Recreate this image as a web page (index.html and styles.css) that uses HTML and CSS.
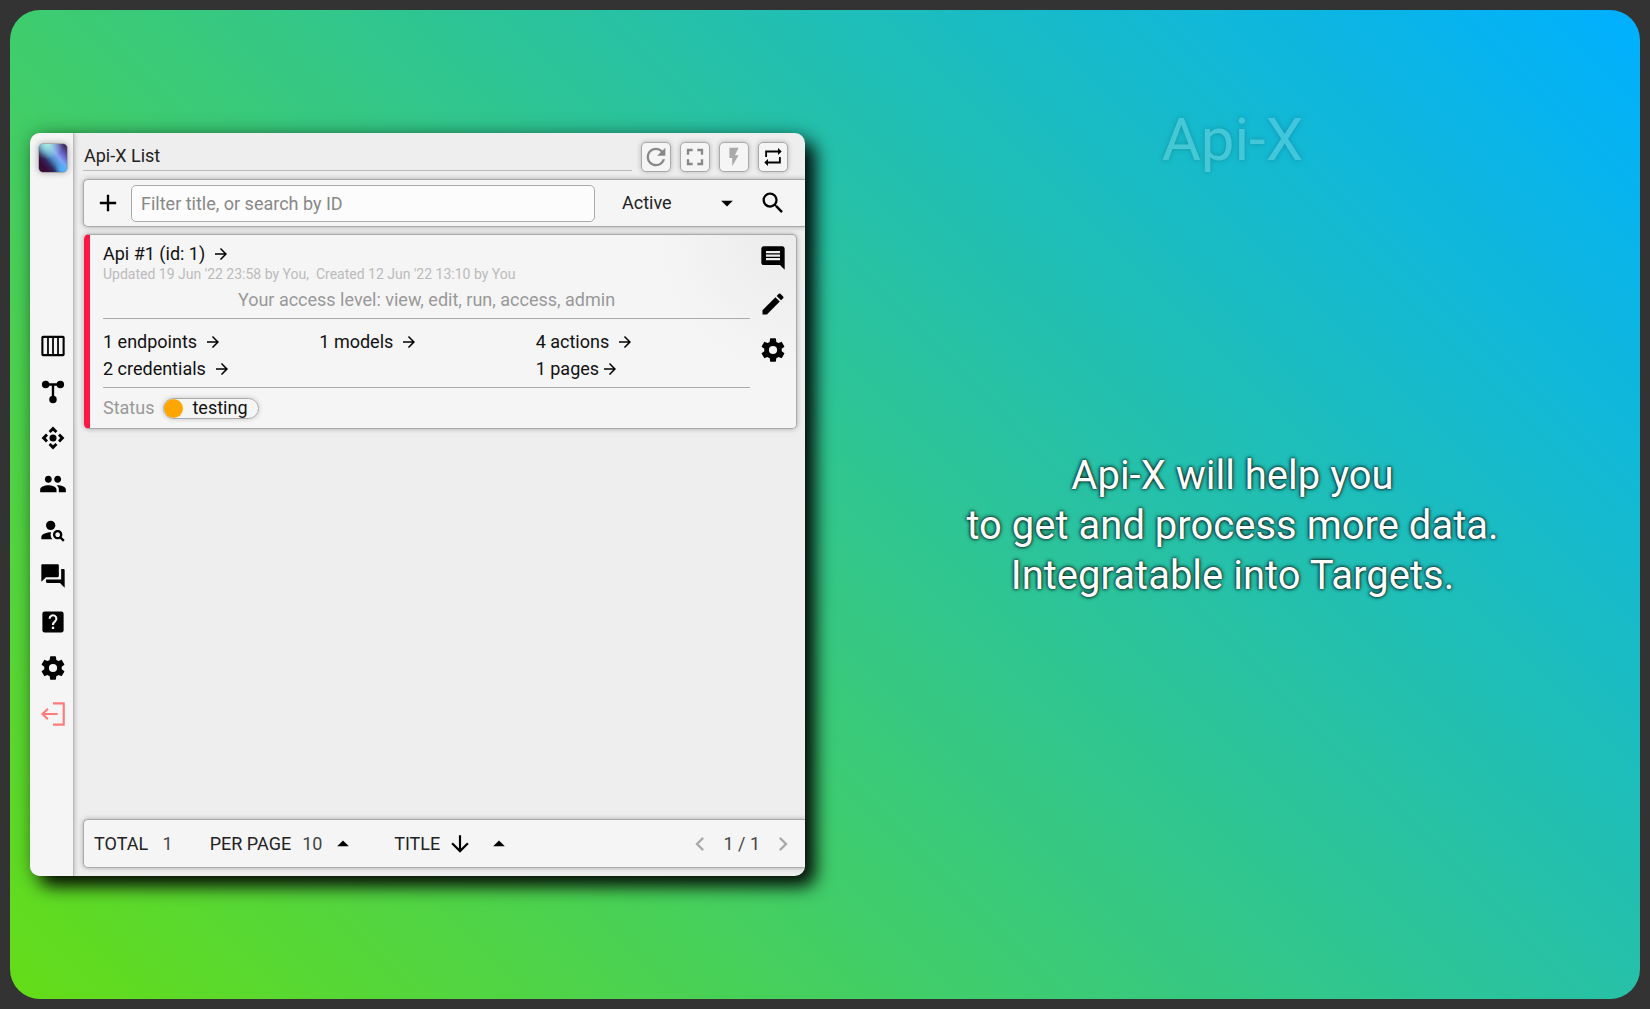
FILE: index.html
```html
<!DOCTYPE html>
<html lang="en">
<head>
<meta charset="utf-8">
<meta name="viewport" content="width=device-width, initial-scale=1">
<title>Api-X</title>
<link rel="stylesheet" href="styles.css">
</head>
<body>
<svg class="sprite" aria-hidden="true">
  <symbol id="columns" viewBox="0 0 24 24"><rect x="2.900" y="4.200" width="18.200" height="15.600" rx=".6" fill="none" stroke="currentColor" stroke-width="1.800"/><path fill="none" stroke="currentColor" stroke-width="1.500" d="M7.700 5v14M12 5v14M16.300 5v14"/></symbol>
  <symbol id="tree" viewBox="0 0 24 24"><path fill="none" stroke="currentColor" stroke-width="2" d="M5 5.600h14M12 5.600v13"/><circle cx="5.700" cy="5.600" r="3.200"/><circle cx="18.300" cy="5.600" r="3.200"/><circle cx="12" cy="18.400" r="3.200"/></symbol>
  <symbol id="target" viewBox="0 0 24 24"><circle cx="12" cy="12" r="3"/><path d="m12 2.200 3.800 3.800-1.700 1.700L12 5.800 9.900 7.700 8.200 6zM12 21.800l3.800-3.800-1.700-1.700-2.100 1.900-2.100-1.900L8.200 18zM2.200 12 6 8.200l1.700 1.700L5.800 12l1.900 2.100L6 15.800zM21.800 12 18 8.200l-1.700 1.700 1.900 2.100-1.900 2.100 1.700 1.700z"/></symbol>
  <symbol id="people" viewBox="0 0 24 24"><path d="M16 11c1.660 0 2.990-1.340 2.990-3S17.660 5 16 5s-3 1.340-3 3 1.340 3 3 3zm-8 0c1.660 0 2.990-1.340 2.990-3S9.660 5 8 5 5 6.340 5 8s1.340 3 3 3zm0 2c-2.330 0-7 1.170-7 3.500V19h14v-2.500c0-2.330-4.670-3.500-7-3.500zm8 0c-.29 0-.62.020-.97.050 1.160.84 1.970 1.970 1.970 3.450V19h6v-2.500c0-2.330-4.670-3.500-7-3.500z"/></symbol>
  <symbol id="person-search" viewBox="0 0 24 24"><circle cx="10" cy="8" r="4"/><path d="M10.350 14.010C7.620 13.910 2 15.270 2 18v2h9.540c-2.470-2.760-1.230-5.890-1.190-5.990zM19.430 18.020c.36-.59.57-1.280.57-2.020 0-2.210-1.790-4-4-4s-4 1.790-4 4 1.790 4 4 4c.74 0 1.430-.22 2.020-.57L20.590 22 22 20.590l-2.570-2.570zM16 18c-1.100 0-2-.9-2-2s.9-2 2-2 2 .9 2 2-.9 2-2 2z"/></symbol>
  <symbol id="forum" viewBox="0 0 24 24"><path d="M21 6h-2v9H6v2c0 .55.45 1 1 1h11l4 4V7c0-.55-.45-1-1-1zm-4 6V3c0-.55-.45-1-1-1H3c-.55 0-1 .45-1 1v14l4-4h10c.55 0 1-.45 1-1z"/></symbol>
  <symbol id="help" viewBox="0 0 24 24"><rect x="2.900" y="2.900" width="18.200" height="18.200" rx="2"/><path fill="none" stroke="#f5f5f5" stroke-width="1.800" d="M9.100 9.200a2.900 2.900 0 1 1 4.600 2.300C12.700 12.300 12 13 12 14.600"/><rect x="11" y="16" width="2" height="2" fill="#f5f5f5"/></symbol>
  <symbol id="gear" viewBox="0 0 24 24"><path d="M12 15.500A3.500 3.500 0 0 1 8.500 12 3.500 3.500 0 0 1 12 8.500a3.500 3.500 0 0 1 3.500 3.500 3.500 3.500 0 0 1-3.500 3.500m7.430-2.530c.04-.32.070-.64.070-.97s-.03-.66-.07-1l2.110-1.630c.19-.15.24-.42.120-.64l-2-3.460c-.12-.22-.39-.31-.61-.22l-2.490 1c-.52-.39-1.060-.73-1.690-.98l-.37-2.650A.506.506 0 0 0 14 2h-4c-.25 0-.46.180-.5.420l-.37 2.650c-.63.250-1.170.590-1.690.980l-2.490-1c-.22-.09-.49 0-.61.220l-2 3.460c-.13.220-.07.490.120.640L4.570 11c-.04.340-.07.670-.07 1s.03.650.070.970l-2.110 1.660c-.19.150-.25.420-.12.640l2 3.460c.12.220.39.300.61.220l2.490-1.010c.52.400 1.060.740 1.690.990l.37 2.650c.04.240.25.420.5.420h4c.25 0 .46-.18.500-.42l.37-2.650c.63-.26 1.170-.59 1.690-.99l2.490 1.010c.22.080.49 0 .61-.22l2-3.460c.12-.22.070-.49-.12-.64l-2.110-1.660Z"/></symbol>
  <symbol id="exit" viewBox="0 0 24 24"><path fill="none" stroke="currentColor" stroke-width="1.800" d="M12 2.900h9.200v18.200H12M16 12H3M7.600 7.400 3 12l4.600 4.600"/></symbol>
  <symbol id="refresh" viewBox="0 0 24 24"><path d="M17.650 6.350A7.958 7.958 0 0 0 12 4c-4.420 0-7.990 3.580-7.990 8s3.570 8 7.990 8c3.730 0 6.840-2.550 7.730-6h-2.080A5.990 5.990 0 0 1 12 18c-3.310 0-6-2.690-6-6s2.690-6 6-6c1.660 0 3.140.69 4.220 1.780L13 11h7V4l-2.350 2.350z"/></symbol>
  <symbol id="fullscreen" viewBox="0 0 24 24"><path d="M5 5h5v2H7v3H5V5m9 0h5v5h-2V7h-3V5m3 9h2v5h-5v-2h3v-3m-7 3v2H5v-5h2v3h3z"/></symbol>
  <symbol id="flash" viewBox="0 0 24 24"><path d="M7 2v11h3v9l7-12h-4l4-8z"/></symbol>
  <symbol id="repeat" viewBox="0 0 24 24"><path fill="none" stroke="currentColor" stroke-width="2" d="M4.500 12V6H18M19.500 12v6H6"/><path d="m17.500 2.200 4 3.800-4 3.800zM6.500 14.200l-4 3.800 4 3.800z"/></symbol>
  <symbol id="plus" viewBox="0 0 24 24"><path d="M19 13h-6v6h-2v-6H5v-2h6V5h2v6h6v2z"/></symbol>
  <symbol id="search" viewBox="0 0 24 24"><path d="M15.500 14h-.79l-.28-.27A6.471 6.471 0 0 0 16 9.500 6.500 6.500 0 1 0 9.500 16c1.610 0 3.090-.59 4.230-1.570l.27.28v.79l5 4.990L20.490 19l-4.990-5zm-6 0C7.010 14 5 11.990 5 9.500S7.010 5 9.500 5 14 7.010 14 9.500 11.990 14 9.500 14z"/></symbol>
  <symbol id="caret" viewBox="0 0 24 24"><path d="m7 10 5 5 5-5z"/></symbol>
  <symbol id="caret-up" viewBox="0 0 24 24"><path d="m7 14 5-5 5 5z"/></symbol>
  <symbol id="arrow" viewBox="0 0 24 24"><path d="m12 4-1.410 1.410L16.170 11H4v2h12.170l-5.580 5.590L12 20l8-8z"/></symbol>
  <symbol id="arrow-down" viewBox="0 0 24 24"><path d="m20 12-1.410-1.410L13 16.170V4h-2v12.170l-5.580-5.590L4 12l8 8z"/></symbol>
  <symbol id="left" viewBox="0 0 24 24"><path d="M15.410 7.410 14 6l-6 6 6 6 1.410-1.410L10.830 12z"/></symbol>
  <symbol id="right" viewBox="0 0 24 24"><path d="M10 6 8.590 7.410 13.170 12l-4.580 4.590L10 18l6-6z"/></symbol>
  <symbol id="comment" viewBox="0 0 24 24"><path d="M21.990 4c0-1.100-.89-2-1.990-2H4c-1.100 0-2 .9-2 2v12c0 1.100.9 2 2 2h14l4 4-.01-18zM18 14H6v-2h12v2zm0-3H6V9h12v2zm0-3H6V6h12v2z"/></symbol>
  <symbol id="pencil" viewBox="0 0 24 24"><path d="M3 17.250V21h3.750L17.810 9.940l-3.750-3.750L3 17.250zM20.710 7.040a.996.996 0 0 0 0-1.410l-2.340-2.340a.996.996 0 0 0-1.410 0l-1.830 1.830 3.750 3.750 1.830-1.830z"/></symbol>
</svg>

<main class="slide">
  <section class="app">
    <aside class="sidebar">
      <a class="logo" href="#" aria-label="Home"></a>
      <nav class="nav">
        <a href="#" aria-label="Boards"><svg><use href="#columns"/></svg></a>
        <a href="#" aria-label="Flows"><svg><use href="#tree"/></svg></a>
        <a href="#" aria-label="Api-X"><svg><use href="#target"/></svg></a>
        <a href="#" aria-label="People"><svg><use href="#people"/></svg></a>
        <a href="#" aria-label="Find a person"><svg><use href="#person-search"/></svg></a>
        <a href="#" aria-label="Messages"><svg><use href="#forum"/></svg></a>
        <a href="#" aria-label="Help"><svg><use href="#help"/></svg></a>
        <a href="#" aria-label="Settings"><svg><use href="#gear"/></svg></a>
        <a class="exit" href="#" aria-label="Log out"><svg><use href="#exit"/></svg></a>
      </nav>
    </aside>

    <div class="content">
      <header class="header">
        <h1 class="heading">Api-X List</h1>
        <button class="tool mid" aria-label="Refresh"><svg><use href="#refresh"/></svg></button>
        <button class="tool mid" aria-label="Full screen"><svg><use href="#fullscreen"/></svg></button>
        <button class="tool dim small" aria-label="Run"><svg><use href="#flash"/></svg></button>
        <button class="tool small" aria-label="Switch side"><svg><use href="#repeat"/></svg></button>
      </header>

      <form class="bar filter">
        <button class="icon" type="button" aria-label="Add"><svg><use href="#plus"/></svg></button>
        <input class="query" type="text" placeholder="Filter title, or search by ID" aria-label="Filter">
        <span class="pick state">
          <select aria-label="State"><option>Active</option></select>
          <svg><use href="#caret"/></svg>
        </span>
        <button class="icon" type="button" aria-label="Search"><svg><use href="#search"/></svg></button>
      </form>

      <article class="card">
        <div class="details">
          <h2 class="name"><a href="#">Api #1 (id: 1) <svg><use href="#arrow"/></svg></a></h2>
          <p class="dates">Updated 19 Jun '22 23:58 by You,&nbsp; Created 12 Jun '22 13:10 by You</p>
          <p class="access">Your access level: view, edit, run, access, admin</p>
          <div class="links">
            <a href="#">1 endpoints <svg><use href="#arrow"/></svg></a>
            <a href="#">1 models <svg><use href="#arrow"/></svg></a>
            <a href="#">4 actions <svg><use href="#arrow"/></svg></a>
            <a href="#">2 credentials <svg><use href="#arrow"/></svg></a>
            <a class="last" href="#">1 pages<svg><use href="#arrow"/></svg></a>
          </div>
          <p class="status">Status <span class="pill"><i class="dot"></i>testing</span></p>
        </div>
        <div class="actions">
          <button aria-label="Comment"><svg><use href="#comment"/></svg></button>
          <button aria-label="Edit"><svg><use href="#pencil"/></svg></button>
          <button aria-label="Configure"><svg><use href="#gear"/></svg></button>
        </div>
      </article>

      <footer class="bar pager">
        <span class="total">TOTAL <span class="value">1</span></span>
        <label class="label" for="size">PER PAGE</label>
        <span class="pick size">
          <select class="value" id="size"><option>10</option></select>
          <svg><use href="#caret-up"/></svg>
        </span>
        <span class="pick sort">
          <select aria-label="Sort by"><option>TITLE</option></select>
          <svg class="direction"><use href="#arrow-down"/></svg>
          <svg><use href="#caret-up"/></svg>
        </span>
        <button class="step" type="button" aria-label="Previous page"><svg><use href="#left"/></svg></button>
        <span class="value">1 / 1</span>
        <button class="step" type="button" aria-label="Next page"><svg><use href="#right"/></svg></button>
      </footer>
    </div>
  </section>

  <section class="pitch">
    <h2 class="product">Api-X</h2>
    <p class="claim">Api-X will help you<br>to get and process more data.<br>Integratable into Targets.</p>
  </section>
</main>
</body>
</html>
```
FILE: styles.css
```css
* { box-sizing: border-box; }

body {
  margin: 0;
  padding: 10px;
  min-height: 100vh;
  display: flex;
  background: #333;
  color: #222;
  font: 18px/24px Roboto, sans-serif;
}

h1, h2, p { margin: 0; font-weight: 400; font-size: inherit; }
a { color: #111; text-decoration: none; }
svg { width: 28px; height: 28px; fill: currentColor; flex: none; display: block; }
.sprite { display: none; }

button {
  padding: 0;
  border: 0;
  background: none;
  color: #000;
  display: grid;
  place-items: center;
}

.slide {
  flex: 1;
  display: grid;
  grid-template-columns: 1fr 1fr;
  gap: 40px;
  padding: 20px;
  align-items: center;
  border-radius: 30px;
  background: linear-gradient(45deg, #64dd17, #00b0ff);
}

/* App window */
.app {
  display: flex;
  min-height: calc(100vh - 266px);
  border-radius: 10px;
  overflow: hidden;
  background: #eee;
  box-shadow: 10px 10px 18px rgba(0, 0, 0, .95), 0 0 20px rgba(0, 0, 0, .25);
}

.sidebar {
  display: flex;
  flex-direction: column;
  align-items: center;
  width: 44px;
  padding: 10px 0 0 2px;
  background: #f5f5f5;
  border-right: 1px solid #bbb;
  box-shadow: 0 0 5px rgba(0, 0, 0, .3);
}

.logo {
  width: 30px;
  height: 30px;
  border: 1px solid #aaa;
  border-radius: 5px;
  background:
    radial-gradient(circle at 88% 90%, #4fb4ff, rgba(80, 110, 230, 0) 25%),
    radial-gradient(circle at 30% 0, #a8ecdf, rgba(110, 215, 225, 0) 45%),
    linear-gradient(52deg, #3a0a38 18%, #302a5c 32%, #4b8fce 48%, #83a6f4 62%, #6a6ad0 75%, #3a2350 95%);
  box-shadow: 0 0 6px rgba(0, 0, 0, .3);
}

.nav {
  flex: 1;
  display: flex;
  flex-direction: column;
  justify-content: center;
  padding-top: 10px;
}
.nav a { display: grid; place-items: center; height: 46px; color: #000; }
.nav .exit { color: #ff7b7b; }

.content {
  flex: 1;
  min-width: 0;
  display: flex;
  flex-direction: column;
  padding: 9px 0 8px 9px;
}

.header { display: flex; gap: 9px; padding-right: 17px; margin-bottom: 7px; }
.heading {
  flex: 1;
  height: 29px;
  padding: 2px 1px;
  border-bottom: 1px solid #bbb;
}
.tool {
  width: 30px;
  height: 30px;
  border: 1px solid #aaa;
  border-radius: 5px;
  background: #f5f5f5;
  box-shadow: 0 0 5px rgba(0, 0, 0, .25);
}
.tool.small svg { width: 22px; height: 22px; }
.tool.mid { color: #888; }
.tool.dim { color: #aaa; }

.bar {
  display: flex;
  align-items: center;
  height: 49px;
  border: 1px solid #aaa;
  border-right: 0;
  border-radius: 5px 0 0 5px;
  background: #f5f5f5;
  box-shadow: 0 0 5px rgba(0, 0, 0, .3);
}

.bar.filter { height: 48px; padding: 0 18px 0 10px; }
.icon { width: 28px; height: 28px; }
.query {
  flex: 1;
  min-width: 0;
  height: 37px;
  margin: 0 27px 0 9px;
  padding: 0 9px;
  border: 1px solid #aaa;
  border-radius: 5px;
  background: #fcfcfc;
  font: inherit;
}
.query::placeholder { color: #888; }

.pick { display: flex; align-items: center; }
select {
  appearance: none;
  padding: 0;
  border: 0;
  background: none;
  color: #222;
  font: inherit;
}
.state { width: 119px; margin-right: 18px; }
.state select { flex: 1; min-width: 0; }
.pick svg { color: #000; }

/* Api card */
.card {
  display: flex;
  margin: 7px 8px auto 1px;
  border: 1px solid #aaa;
  border-left: 6px solid #ff1744;
  border-radius: 5px;
  background: radial-gradient(circle at 100% 0, #ebebeb, #f5f5f5 140px);
  box-shadow: 0 0 5px rgba(0, 0, 0, .3);
}
.details { flex: 1; padding: 7px 0 8px 13px; }
.card a { display: flex; align-items: center; gap: 7px; }
.card a svg { width: 18px; height: 18px; color: #000; }
.dates { color: #bbb; font-size: 14px; line-height: 16px; }
.access {
  padding: 6px 0;
  border-bottom: 1px solid #aaa;
  color: #999;
  text-align: center;
}
.links {
  display: grid;
  grid-template-columns: repeat(3, 1fr);
  column-gap: 2px;
  padding: 9px 0 5px;
  line-height: 27px;
  border-bottom: 1px solid #aaa;
}
.links .last { grid-column: 3; gap: 2px; }
.status { display: flex; align-items: center; gap: 9px; padding-top: 8px; color: #999; }
.pill {
  display: flex;
  align-items: center;
  gap: 9px;
  height: 21px;
  padding-right: 10px;
  border: 1px solid #aaa;
  border-radius: 11px;
  color: #111;
  box-shadow: 0 0 5px rgba(0, 0, 0, .2);
}
.dot { width: 19px; height: 19px; border-radius: 50%; background: #ffa500; }
.actions { display: flex; flex-direction: column; width: 46px; padding-right: 1px; }
.actions button { height: 46px; }

/* Pager */
.pager { padding: 0 8px 0 10px; }
.value { color: #444; }
.total .value { margin-left: 10px; }
.label { margin-left: 37px; }
.size { margin-left: 11px; gap: 6px; }
.sort { margin: 0 auto 0 37px; gap: 6px; }
.sort .direction { width: 26px; height: 26px; margin-right: 6px; }
.step { width: 28px; color: #aaa; }
.step + .value, .value + .step { margin-left: 9px; }

/* Text column */
.pitch {
  align-self: stretch;
  display: flex;
  flex-direction: column;
  padding: 75px 0 102px;
  color: #fff;
  text-align: center;
}
.product {
  font-size: 60px;
  line-height: 70px;
  text-shadow: 0 0 5px #000;
  opacity: .2;
}
.claim {
  margin: auto 0;
  font-size: 40px;
  line-height: 50px;
  text-shadow: 0 0 4px #000, 0 0 2px rgba(0, 0, 0, .8);
}
```
